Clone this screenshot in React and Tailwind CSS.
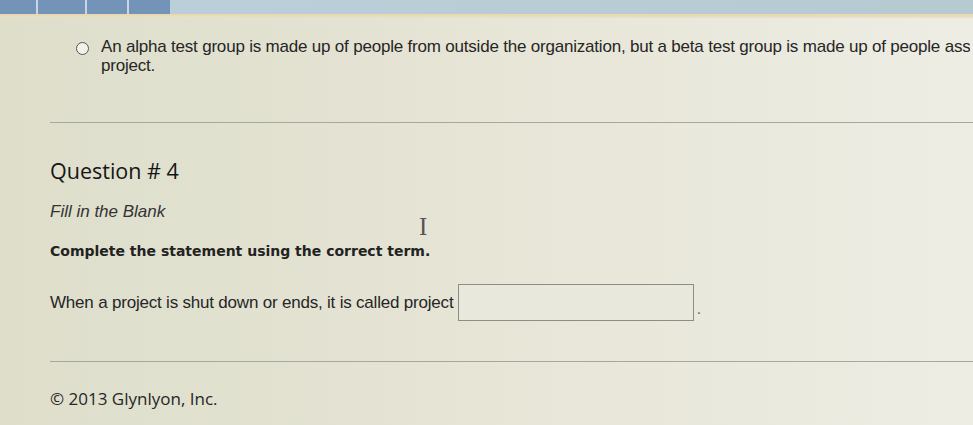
export default function App() {
  return (
    <div className="w-[973px] h-[425px] overflow-hidden bg-gradient-to-r from-[#dedecb] via-[#e6e5d6] to-[#eeede4] text-[#2b2b2b] font-['Liberation_Sans',Arial,sans-serif]">
      <div className="flex h-[14px] bg-gradient-to-r from-[#bcd0dc] to-[#b6cad2]">
        <div className="w-[36px] bg-[#7393b8]" />
        <div className="w-[2px] bg-[#c9d6e2]" />
        <div className="w-[47px] bg-[#7393b8]" />
        <div className="w-[2px] bg-[#c9d6e2]" />
        <div className="w-[40px] bg-[#7393b8]" />
        <div className="w-[2px] bg-[#c9d6e2]" />
        <div className="w-[41px] bg-[#7393b8]" />
      </div>
      <div className="h-[4px] bg-gradient-to-b from-[#ead7a8] to-[#e4e2cf]" />

      <div className="flex items-start pl-[76px] pt-[19px] gap-[12px]">
        <div className="mt-[5px] w-[13px] h-[13px] shrink-0 rounded-full border-[1.5px] border-[#555] bg-[#f2f2ea]" />
        <div className="overflow-hidden text-[17px] leading-[19px] tracking-[-0.2px] text-[#262626] whitespace-nowrap">
          <div>An alpha test group is made up of people from outside the organization, but a beta test group is made up of people ass</div>
          <div>project.</div>
        </div>
      </div>

      <div className="ml-[50px] mt-[47px] h-[1px] bg-[#a5a89e]" />

      <div className="pl-[50px]">
        <div className="mt-[35px] text-[21.5px] leading-[26px] text-[#151515] font-['Open_Sans',sans-serif]">Question # 4</div>
        <div className="mt-[19px] text-[17px] leading-[18px] italic text-[#333]">Fill in the Blank</div>
        <div className="relative mt-[21px] text-[14px] leading-[18px] font-bold text-[#222] font-['DejaVu_Sans',sans-serif]">
          Complete the statement using the correct term.
          <span className="absolute left-[369px] top-[-28px] text-[25px] leading-[25px] font-normal text-[#555] font-['Liberation_Serif',serif]">I</span>
        </div>
        <div className="mt-[24px] flex items-center text-[17px] text-[#262626]">
          <span className="tracking-[-0.2px]">When a project is shut down or ends, it is called project</span>
          <div className="ml-[5px] w-[236px] h-[37px] border border-[#8c8d86] bg-[#e9e8dc]" />
          <span className="self-end ml-[2px] text-[#777]">.</span>
        </div>
      </div>

      <div className="ml-[50px] mt-[40px] h-[1px] bg-[#a5a89e]" />

      <div className="pl-[50px] mt-[26px] text-[17px] leading-[22px] text-[#262626] font-['Open_Sans',sans-serif]">© 2013 Glynlyon, Inc.</div>
    </div>
  );
}
